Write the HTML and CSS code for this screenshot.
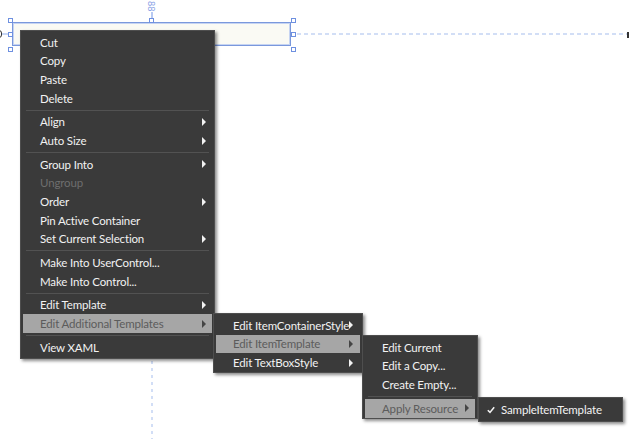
FILE: index.html
```html
<!DOCTYPE html>
<html>
<head>
<meta charset="utf-8">
<link rel="stylesheet" href="styles.css">
</head>
<body>
<div class="surface">
  <span class="dim-top">88</span>
  <span class="tick-top"></span>
  <span class="edge-mark edge-left"></span>
  <span class="edge-mark edge-right"></span>
  <span class="guide-left"></span>
  <span class="guide-right"></span>
  <span class="guide-down"></span>
  <div class="selection"></div>
  <span class="handle h-tl"></span>
  <span class="handle h-tm"></span>
  <span class="handle h-tr"></span>
  <span class="handle h-ml"></span>
  <span class="handle h-mr"></span>
  <span class="handle h-bl"></span>
  <span class="handle h-br"></span>

  <div class="menu menu-main">
    <div class="item">Cut</div>
    <div class="item">Copy</div>
    <div class="item">Paste</div>
    <div class="item">Delete</div>
    <div class="sep"></div>
    <div class="item sub">Align</div>
    <div class="item sub">Auto Size</div>
    <div class="sep"></div>
    <div class="item sub">Group Into</div>
    <div class="item disabled">Ungroup</div>
    <div class="item sub">Order</div>
    <div class="item">Pin Active Container</div>
    <div class="item sub">Set Current Selection</div>
    <div class="sep"></div>
    <div class="item">Make Into UserControl...</div>
    <div class="item">Make Into Control...</div>
    <div class="sep"></div>
    <div class="item sub">Edit Template</div>
    <div class="item sub active">Edit Additional Templates</div>
    <div class="sep"></div>
    <div class="item">View XAML</div>
  </div>

  <div class="menu menu-sub1">
    <div class="item sub">Edit ItemContainerStyle</div>
    <div class="item sub active">Edit ItemTemplate</div>
    <div class="item sub">Edit TextBoxStyle</div>
  </div>

  <div class="menu menu-sub2">
    <div class="item">Edit Current</div>
    <div class="item">Edit a Copy...</div>
    <div class="item">Create Empty...</div>
    <div class="sep"></div>
    <div class="item sub active">Apply Resource</div>
  </div>

  <div class="menu menu-sub3">
    <div class="item checked"><svg class="check" width="8" height="8" viewBox="0 0 8 8"><path d="M0.8 4.2 L3 6.4 L7.2 1.2" fill="none" stroke="#f2f2f2" stroke-width="1.6"/></svg>SampleItemTemplate</div>
  </div>
</div>
</body>
</html>
```
FILE: styles.css
```css
html, body {
  margin: 0;
  padding: 0;
  background: #ffffff;
  overflow: hidden;
}
.surface {
  position: relative;
  width: 629px;
  height: 439px;
  overflow: hidden;
  font-family: Lato, "Open Sans", sans-serif;
}
.dim-top {
  position: absolute;
  left: 147px;
  top: 1px;
  font-size: 9px;
  line-height: 9px;
  color: #8aa2e6;
  transform: rotate(90deg);
  transform-origin: left top;
  margin-left: 9px;
}
.tick-top {
  position: absolute;
  left: 151px;
  top: 12px;
  width: 2px;
  height: 6px;
  background: #b7c9f2;
}
.edge-mark {
  position: absolute;
  box-sizing: border-box;
}
.edge-left {
  left: -4px;
  top: 30px;
  width: 6px;
  height: 8px;
  border: 1.5px solid #333;
  border-radius: 3px;
}
.edge-right {
  left: 627px;
  top: 32px;
  width: 2px;
  height: 6px;
  background: #333;
}
.guide-left {
  position: absolute;
  left: 2px;
  top: 33px;
  width: 6px;
  height: 2px;
  background: #c7d6f5;
}
.guide-right {
  position: absolute;
  left: 297px;
  top: 33px;
  width: 330px;
  height: 2px;
  background: repeating-linear-gradient(to right, #d2def6 0 4px, transparent 4px 7px);
}
.guide-down {
  position: absolute;
  left: 151px;
  top: 358px;
  width: 2px;
  height: 81px;
  background: repeating-linear-gradient(to bottom, transparent 0 3px, #d2def6 3px 6px, transparent 6px 7px);
}
.selection {
  position: absolute;
  left: 12px;
  top: 22px;
  width: 277px;
  height: 22px;
  border: 1px solid #7a98dc;
  box-shadow: inset 0 0 0 1px #c6d4f2;
  background: #fafaf4;
}
.handle {
  position: absolute;
  width: 3px;
  height: 3px;
  border: 1px solid #6e90e0;
  background: #ffffff;
}
.h-tl { left: 8px; top: 18px; }
.h-tm { left: 149px; top: 18px; }
.h-tr { left: 291px; top: 18px; }
.h-ml { left: 8px; top: 32px; }
.h-mr { left: 291px; top: 32px; }
.h-bl { left: 8px; top: 47px; }
.h-br { left: 291px; top: 47px; }

.menu {
  position: absolute;
  box-sizing: border-box;
  background: #3a3a3a;
  border: 1px solid #4e4e4e;
  padding: 2px 2px 1px;
  box-shadow: 2px 2px 3px rgba(0, 0, 0, 0.45);
  display: flex;
  flex-direction: column;
  color: #f2f2f2;
  font-size: 11.5px;
  letter-spacing: -0.15px;
}
.menu-main { left: 20px; top: 30px; width: 195px; height: 329px; z-index: 1; }
.menu-sub1 { left: 213px; top: 313px; width: 150px; height: 60px; z-index: 2; }
.menu-sub2 { left: 362px; top: 335px; width: 116px; height: 84px; z-index: 3; }
.menu-sub3 { left: 478px; top: 397px; width: 145px; height: 25px; z-index: 4; padding: 2px; }

.item {
  position: relative;
  height: 18.67px;
  display: flex;
  align-items: center;
  padding-left: 17px;
  white-space: nowrap;
  flex: none;
}
.menu-sub3 .item { padding-left: 6px; height: 19px; }
.check { margin-right: 6px; flex: none; }
.item.disabled { color: #6e6e6e; }
.item.active { background: #a6a6a6; color: #5c5c5c; }
.item.sub::after {
  content: "";
  position: absolute;
  right: 6px;
  top: 50%;
  margin-top: -4px;
  border-style: solid;
  border-width: 4px 0 4px 4px;
  border-color: transparent transparent transparent #f2f2f2;
}
.item.sub.active::after {
  border-color: transparent transparent transparent #454545;
}
.menu-sub1 .item.sub::after { right: 7px; }
.sep {
  flex: none;
  height: 1px;
  margin: 2px 3px;
  background: #525252;
}
```
